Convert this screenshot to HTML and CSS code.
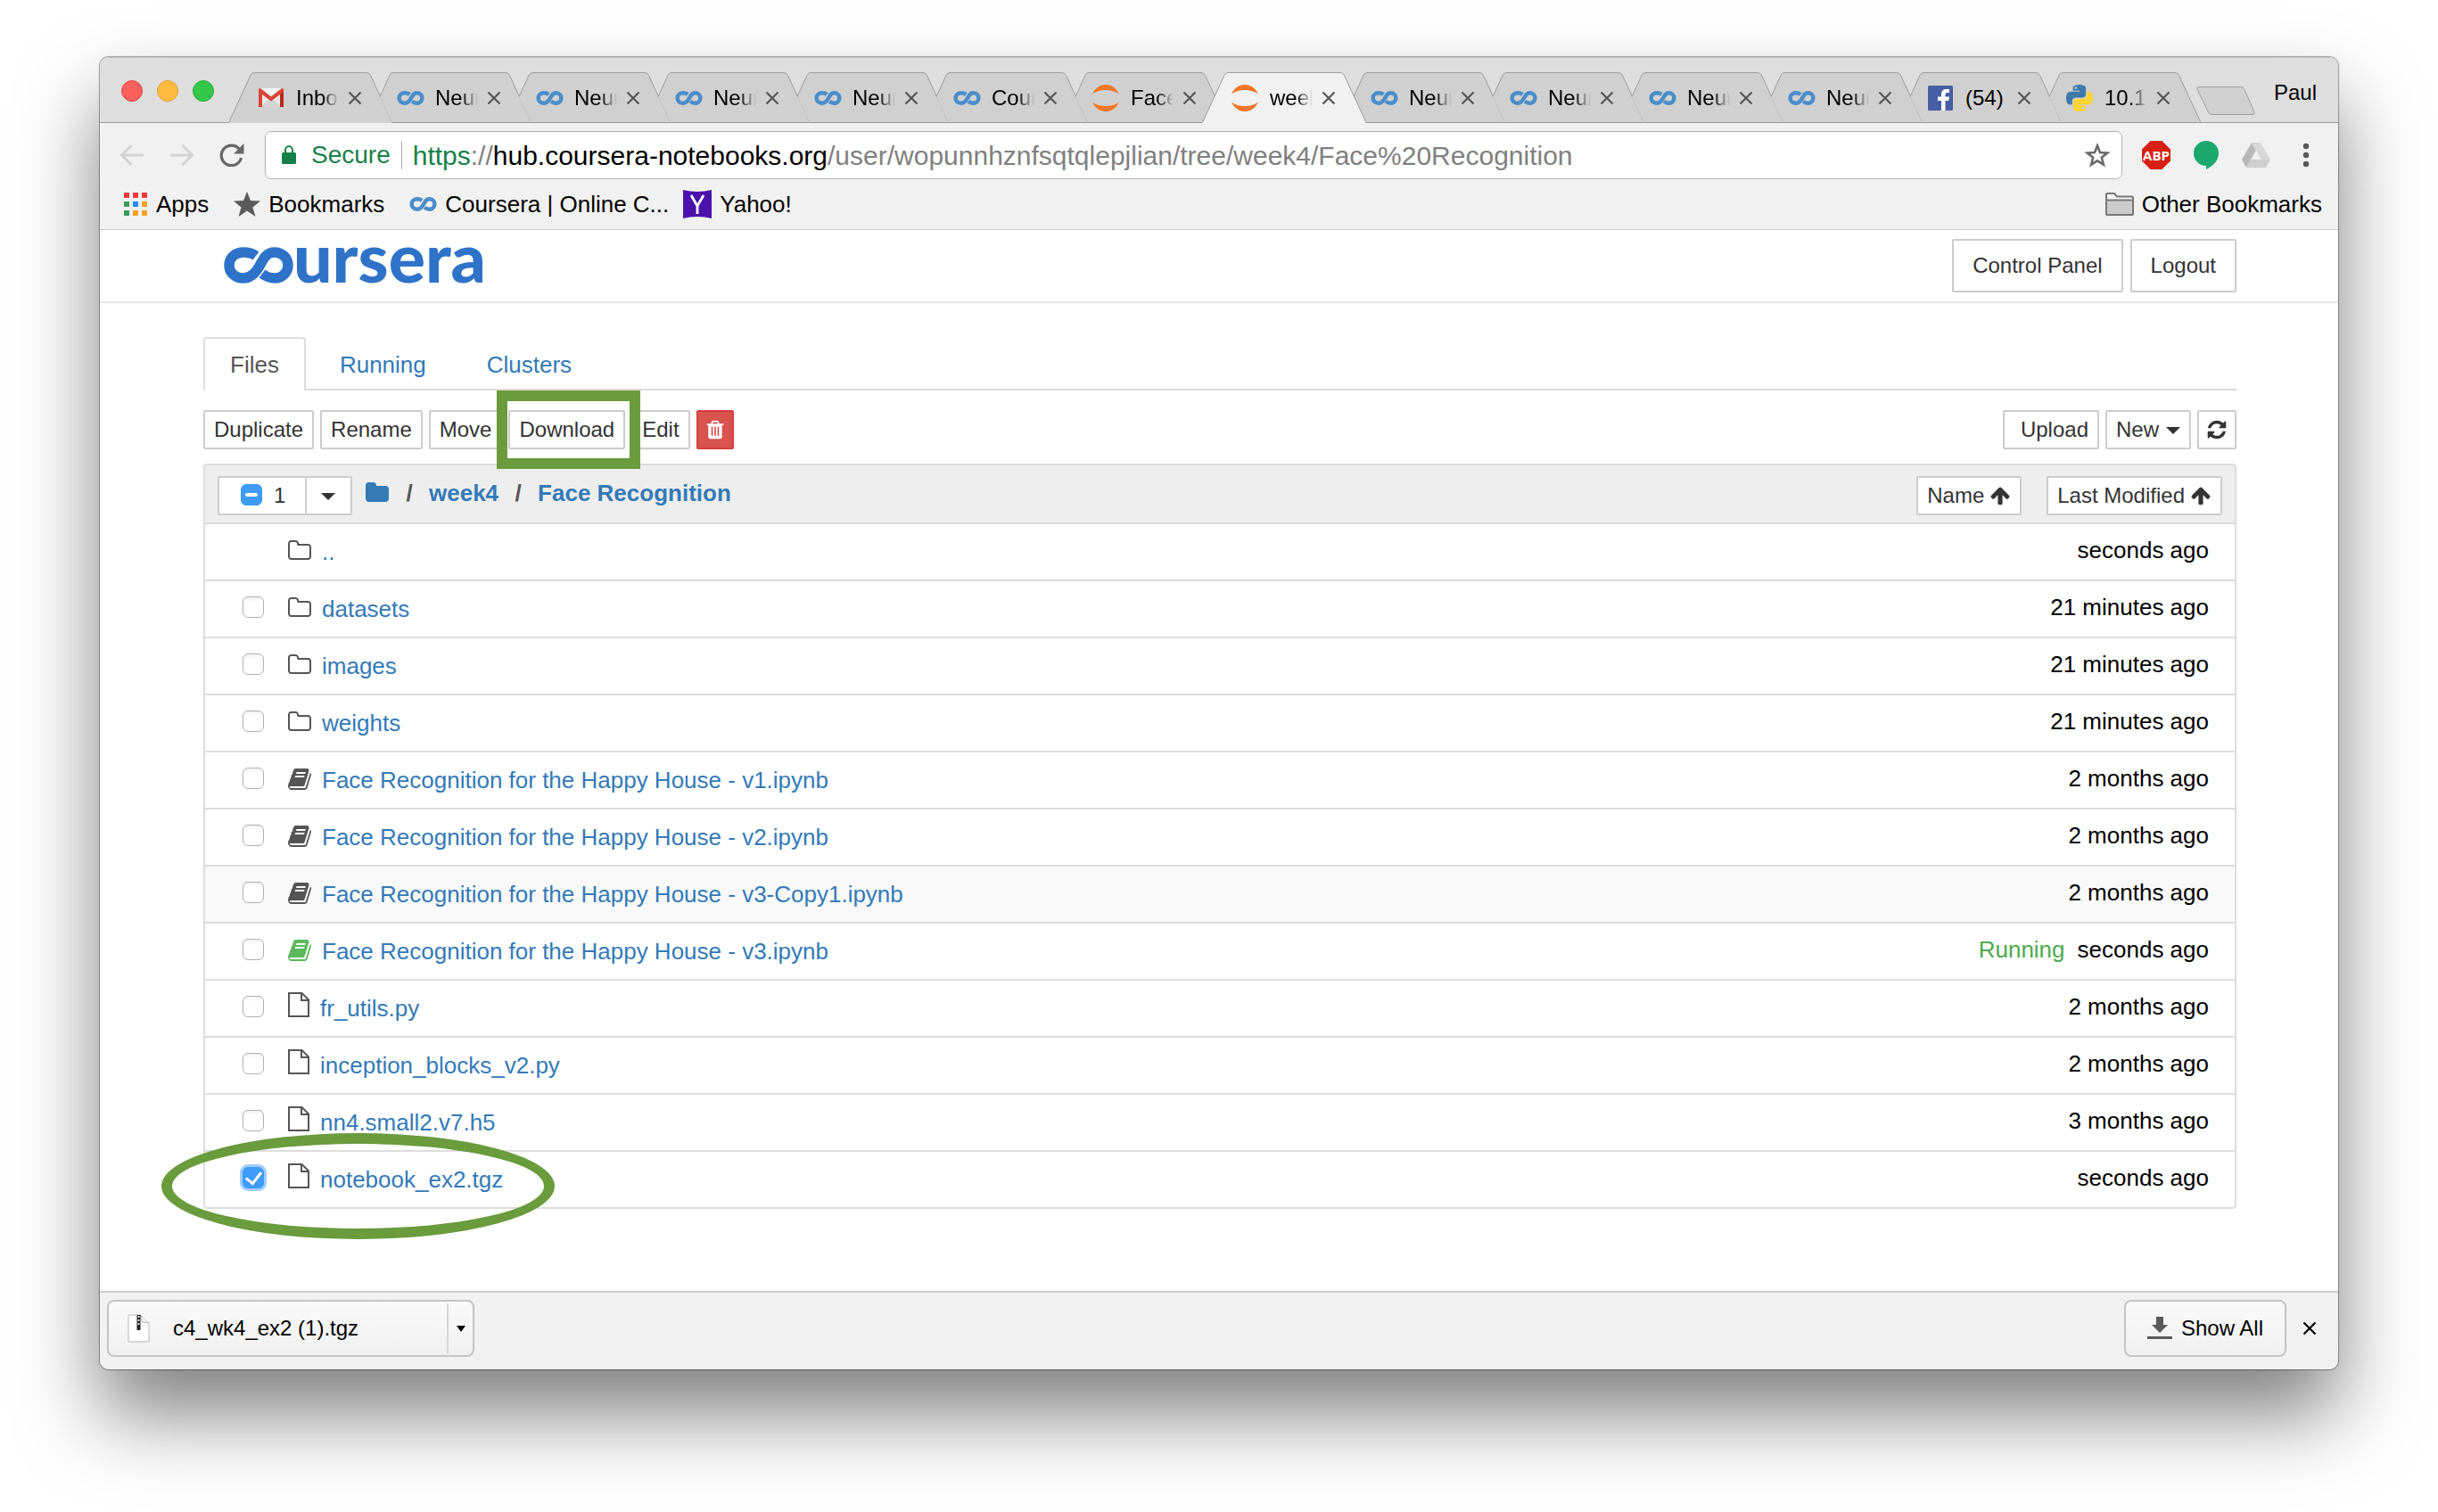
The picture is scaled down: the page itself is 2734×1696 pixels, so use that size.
FILE: index.html
```html
<!DOCTYPE html>
<html lang="en">
<head>
<meta charset="utf-8">
<title>Face Recognition</title>
<link rel="stylesheet" href="styles.css">
</head>
<body>
<svg class="sprite" aria-hidden="true">
  <symbol id="tab-full" viewBox="0 0 184 57"><path class="fill" d="M0 57 25 3.500Q26.500.5 29 .5H155Q158 .5 159.500 3.500L184 57z"/><path class="line" d="M.5 56.500 25 3.500Q26.500.5 29 .5H155Q158 .5 159.500 3.500L184 56.500"/></symbol>
  <symbol id="tab-notch" viewBox="0 0 184 57"><path class="fill" d="M28 57 14 27.500 25 3.500Q26.500.5 29 .5H155Q158 .5 159.500 3.500L184 57z"/><path class="line" d="M14 27.500 25 3.500Q26.500.5 29 .5H155Q158 .5 159.500 3.500L184 56.500M28 56.500H184"/></symbol>
  <symbol id="coursera" viewBox="0 0 78 41"><path d="M36 10C32 7 27 6 22 6 13 6 6 12 6 20.500 6 29 13 35 22 35 31 35 36 29 40.500 20.500 45 12 48 6 57 6 65 6 72 12 72 20.500 72 29 65 35 57 35 51 35 47 33 43 30" fill="none" stroke="currentColor" stroke-width="11.500"/></symbol>
  <symbol id="jupyter" viewBox="0 0 30 30"><path fill="#f37726" d="M0 10.500C3 4 8.500 0 15 0s12 4 15 10.500C26 7.500 21 6 15 6S4 7.500 0 10.500zM0 19.500C3 26 8.500 30 15 30s12-4 15-10.500C26 22.500 21 24 15 24S4 22.500 0 19.500z"/></symbol>
  <symbol id="gmail" viewBox="0 0 28 21"><path fill="#e9e9e9" d="M2 0h24v21H2z"/><path fill="#d4d4d4" d="M2 21 14 10l12 11z"/><path fill="#f5f5f5" d="M4 0h20L14 8z"/><path fill="#db4437" d="M0 21V1.500Q0 0 2 0L14 9.500 26 0q2 0 2 1.500V21h-4V7L14 14.500 4 7v14z"/><path fill="#b8281d" d="M24 21V7l4-3v17z"/></symbol>
  <symbol id="facebook" viewBox="0 0 28 28"><rect width="28" height="28" rx="1.500" fill="#475fa2"/><path fill="#fff" d="M15 28V17h-4v-4.500h4V9.500C15 6 17.500 4 20.500 4H24v4h-2.500C20 8 19.500 8.700 19.500 10v2.500H24l-.6 4.500h-3.900v11z"/></symbol>
  <symbol id="python" viewBox="0 0 24 24"><path fill="#3d7aab" d="M11.900 0C5.800 0 6.200 2.600 6.200 2.600v2.800H12v.8H3.900S0 5.800 0 11.900s3.400 5.900 3.400 5.900h2v-2.900s-.1-3.400 3.300-3.400h5.800s3.200 0 3.200-3.100V3.200S18.200 0 11.900 0zM8.700 1.800a1 1 0 1 1 0 2.100 1 1 0 0 1 0-2.100z"/><path transform="rotate(180 12 12)" fill="#fdd437" d="M11.900 0C5.800 0 6.200 2.600 6.200 2.600v2.800H12v.8H3.900S0 5.800 0 11.900s3.400 5.900 3.400 5.900h2v-2.900s-.1-3.400 3.300-3.400h5.800s3.200 0 3.200-3.100V3.200S18.200 0 11.900 0zM8.700 1.800a1 1 0 1 1 0 2.100 1 1 0 0 1 0-2.100z"/></symbol>
  <symbol id="cross" viewBox="0 0 16 16"><path d="M1.500 1.500l13 13M14.500 1.500l-13 13" fill="none" stroke="currentColor" stroke-width="2.200"/></symbol>
  <symbol id="caret" viewBox="0 0 16 8"><path d="M0 0h16L8 8z" fill="currentColor"/></symbol>
  <symbol id="folder-o" viewBox="0 0 1792 1792"><path fill="currentColor" d="M1600 1312v-704q0-40-28-68t-68-28h-704q-40 0-68-28t-28-68v-64q0-40-28-68t-68-28h-320q-40 0-68 28t-28 68v960q0 40 28 68t68 28h1216q40 0 68-28t28-68zm128-704v704q0 92-66 158t-158 66h-1216q-92 0-158-66t-66-158v-960q0-92 66-158t158-66h320q92 0 158 66t66 158v32h672q92 0 158 66t66 158z"/></symbol>
  <symbol id="folder" viewBox="0 0 1792 1792"><path fill="currentColor" d="M1728 608v704q0 92-66 158t-158 66h-1216q-92 0-158-66t-66-158v-960q0-92 66-158t158-66h320q92 0 158 66t66 158v32h672q92 0 158 66t66 158z"/></symbol>
  <symbol id="book" viewBox="0 0 1792 1792"><path fill="currentColor" d="M1703 478q40 57 18 129l-275 906q-19 64-76.500 107.500t-122.500 43.500h-923q-77 0-148.500-53.500t-99.500-131.500q-24-67-2-127 0-4 3-27t4-37q1-8-3-21.500t-3-19.500q2-11 8-21t16.500-23.500 16.500-23.500q23-38 45-91.500t30-91.500q3-10 .5-30t-.5-28q3-11 17-28t17-23q21-36 42-92t25-90q1-9-2.500-32t.5-28q4-13 22-30.500t22-22.500q19-26 42.500-84.500t27.500-96.500q1-8-3-25.500t-2-26.500q2-8 9-18t18-23 17-21q8-12 16.500-30.500t15-35 16-36 19.500-32 26.500-23.500 36-11.500 47.500 5.500l-1 3q38-9 51-9h761q74 0 114 56t18 130l-274 906q-36 119-71.500 153.500t-128.500 34.500h-869q-27 0-38 15-11 16-1 43 24 70 144 70h923q29 0 56-15.500t35-41.500l300-987q7-22 5-57 38 15 59 43zm-1064 2q-4 13 2 22.500t20 9.500h608q13 0 25.500-9.500t16.500-22.500l21-64q4-13-2-22.500t-20-9.500h-608q-13 0-25.500 9.500t-16.500 22.500zm-83 256q-4 13 2 22.500t20 9.500h608q13 0 25.500-9.500t16.500-22.500l21-64q4-13-2-22.500t-20-9.500h-608q-13 0-25.500 9.500t-16.500 22.500z"/></symbol>
  <symbol id="file" viewBox="0 0 26 28"><path d="M2 1h14.500L24 8.500V27H2zM16 1v8h8" fill="none" stroke="currentColor" stroke-width="2"/></symbol>
  <symbol id="arrow-up" viewBox="0 0 1792 1792"><path fill="currentColor" d="M1675 971q0 51-37 90l-75 75q-38 38-91 38-54 0-90-38l-294-293v704q0 52-37.500 84.500t-90.500 32.500h-128q-53 0-90.500-32.500t-37.500-84.500v-704l-294 293q-36 38-90 38t-90-38l-75-75q-38-38-38-90 0-53 38-91l651-651q35-37 90-37 54 0 91 37l651 651q37 39 37 91z"/></symbol>
  <symbol id="refresh" viewBox="0 0 1792 1792"><path fill="currentColor" d="M1639 1056q0 5-1 7-64 268-268 434.500t-478 166.500q-146 0-282.500-55t-243.500-157l-129 129q-19 19-45 19t-45-19-19-45v-448q0-26 19-45t45-19h448q26 0 45 19t19 45-19 45l-137 137q71 66 161 102t187 36q134 0 250-65t186-179q11-17 53-117 8-23 30-23h192q13 0 22.500 9.500t9.500 22.500zm25-800v448q0 26-19 45t-45 19h-448q-26 0-45-19t-19-45 19-45l138-138q-148-137-349-137-134 0-250 65t-186 179q-11 17-53 117-8 23-30 23h-199q-13 0-22.500-9.500t-9.500-22.500v-7q65-268 270-434.500t480-166.500q146 0 284 55.500t245 156.500l130-129q19-19 45-19t45 19 19 45z"/></symbol>
  <symbol id="trash" viewBox="0 0 1792 1792"><path fill="currentColor" d="M704 1376v-704q0-14-9-23t-23-9h-64q-14 0-23 9t-9 23v704q0 14 9 23t23 9h64q14 0 23-9t9-23zm256 0v-704q0-14-9-23t-23-9h-64q-14 0-23 9t-9 23v704q0 14 9 23t23 9h64q14 0 23-9t9-23zm256 0v-704q0-14-9-23t-23-9h-64q-14 0-23 9t-9 23v704q0 14 9 23t23 9h64q14 0 23-9t9-23zm-544-992h448l-48-117q-7-9-17-11h-317q-10 2-17 11zm928 32v64q0 14-9 23t-23 9h-96v948q0 83-47 143.500t-113 60.500h-832q-66 0-113-58.500t-47-141.500v-952h-96q-14 0-23-9t-9-23v-64q0-14 9-23t23-9h309l70-167q15-37 54-63t79-26h320q40 0 79 26t54 63l70 167h309q14 0 23 9t9 23z"/></symbol>
</svg>

<div class="window">
  <div class="tabstrip">
    <div class="lights"><button class="light red" aria-label="Close window"></button><button class="light amber" aria-label="Minimize"></button><button class="light green" aria-label="Zoom"></button></div>
    <div class="tabs">
      <div class="tab"><svg class="shape"><use href="#tab-full"/></svg><svg class="fav gmail"><use href="#gmail"/></svg><span class="title">Inbo</span><button class="close" aria-label="Close tab"><svg><use href="#cross"/></svg></button></div>
      <div class="tab"><svg class="shape"><use href="#tab-notch"/></svg><svg class="fav coursera"><use href="#coursera"/></svg><span class="title">Neur</span><button class="close" aria-label="Close tab"><svg><use href="#cross"/></svg></button></div>
      <div class="tab"><svg class="shape"><use href="#tab-notch"/></svg><svg class="fav coursera"><use href="#coursera"/></svg><span class="title">Neur</span><button class="close" aria-label="Close tab"><svg><use href="#cross"/></svg></button></div>
      <div class="tab"><svg class="shape"><use href="#tab-notch"/></svg><svg class="fav coursera"><use href="#coursera"/></svg><span class="title">Neur</span><button class="close" aria-label="Close tab"><svg><use href="#cross"/></svg></button></div>
      <div class="tab"><svg class="shape"><use href="#tab-notch"/></svg><svg class="fav coursera"><use href="#coursera"/></svg><span class="title">Neur</span><button class="close" aria-label="Close tab"><svg><use href="#cross"/></svg></button></div>
      <div class="tab"><svg class="shape"><use href="#tab-notch"/></svg><svg class="fav coursera"><use href="#coursera"/></svg><span class="title">Cour</span><button class="close" aria-label="Close tab"><svg><use href="#cross"/></svg></button></div>
      <div class="tab"><svg class="shape"><use href="#tab-notch"/></svg><svg class="fav"><use href="#jupyter"/></svg><span class="title">Face</span><button class="close" aria-label="Close tab"><svg><use href="#cross"/></svg></button></div>
      <div class="tab active"><svg class="shape"><use href="#tab-full"/></svg><svg class="fav"><use href="#jupyter"/></svg><span class="title">week</span><button class="close" aria-label="Close tab"><svg><use href="#cross"/></svg></button></div>
      <div class="tab"><svg class="shape"><use href="#tab-notch"/></svg><svg class="fav coursera"><use href="#coursera"/></svg><span class="title">Neur</span><button class="close" aria-label="Close tab"><svg><use href="#cross"/></svg></button></div>
      <div class="tab"><svg class="shape"><use href="#tab-notch"/></svg><svg class="fav coursera"><use href="#coursera"/></svg><span class="title">Neur</span><button class="close" aria-label="Close tab"><svg><use href="#cross"/></svg></button></div>
      <div class="tab"><svg class="shape"><use href="#tab-notch"/></svg><svg class="fav coursera"><use href="#coursera"/></svg><span class="title">Neur</span><button class="close" aria-label="Close tab"><svg><use href="#cross"/></svg></button></div>
      <div class="tab"><svg class="shape"><use href="#tab-notch"/></svg><svg class="fav coursera"><use href="#coursera"/></svg><span class="title">Neur</span><button class="close" aria-label="Close tab"><svg><use href="#cross"/></svg></button></div>
      <div class="tab"><svg class="shape"><use href="#tab-notch"/></svg><svg class="fav facebook"><use href="#facebook"/></svg><span class="title whole">(54)</span><button class="close" aria-label="Close tab"><svg><use href="#cross"/></svg></button></div>
      <div class="tab"><svg class="shape"><use href="#tab-notch"/></svg><svg class="fav python"><use href="#python"/></svg><span class="title">10.1</span><button class="close" aria-label="Close tab"><svg><use href="#cross"/></svg></button></div>
    </div>
    <button class="newtab" aria-label="New tab"><svg viewBox="0 0 66 32"><path d="M4 .5H50q2.500 0 3.500 2L65 28.500q1 3-2 3H18q-3 0-4.500-2.500L1 3Q0 .5 4 .5z" fill="#d0d0d0" stroke="#a0a0a0"/></svg></button>
    <button class="profile">Paul</button>
  </div>

  <div class="toolbar">
    <div class="nav">
      <button aria-label="Back"><svg width="28" height="26" viewBox="0 0 28 26"><path d="M27 13H3M13.500 2 2.500 13l11 11" fill="none" stroke="#d3d3d3" stroke-width="3"/></svg></button>
      <button aria-label="Forward"><svg width="28" height="26" viewBox="0 0 28 26"><path d="M1 13h24M14.500 2l11 11-11 11" fill="none" stroke="#d3d3d3" stroke-width="3"/></svg></button>
      <button aria-label="Reload"><svg width="28" height="26" viewBox="0 0 28 26"><path d="M22.500 6.500A11.300 11.300 0 1 0 24.500 16" fill="none" stroke="#676767" stroke-width="3.200"/><path d="M27.500 0v11.500H16z" fill="#676767"/></svg></button>
    </div>
    <div class="omnibox">
      <svg width="16" height="22" viewBox="0 0 16 22"><rect y="8" width="16" height="13" rx="1.500" fill="#178048"/><path d="M4 9V5.500a4 4.500 0 0 1 8 0V9" fill="none" stroke="#178048" stroke-width="2"/></svg>
      <span class="secure">Secure</span>
      <div class="url" role="textbox" aria-label="Address" tabindex="0"><span class="scheme">https</span><span>://</span><span class="host">hub.coursera-notebooks.org</span><span>/user/wopunnhznfsqtqlepjlian/tree/week4/Face%20Recognition</span></div>
      <button aria-label="Bookmark this page"><svg width="30" height="28" viewBox="0 0 30 28"><path d="M15 3.500l3 7.600 8.200.5-6.400 5.100 2.100 8L15 20.300 8.100 24.700l2.100-8-6.400-5.100 8.200-.5z" fill="none" stroke="#6b6b6b" stroke-width="2.600"/></svg></button>
    </div>
    <div class="extensions">
      <button aria-label="Adblock Plus"><svg width="32" height="32" viewBox="0 0 32 32"><path d="M9.500 0h13L32 9.500v13L22.500 32h-13L0 22.500v-13z" fill="#d92015"/><text x="16" y="22" text-anchor="middle" class="abp">ABP</text></svg></button>
      <button aria-label="Hangouts"><svg width="28" height="32" viewBox="0 0 28 32"><path d="M14 0a14 14 0 0 1 14 14c0 8-6 14-14 18v-4A14 14 0 0 1 14 0z" fill="#1ba96d"/></svg></button>
      <button aria-label="Drive"><svg width="32" height="28" viewBox="0 0 32 28"><path d="M11 0 0 19l5 9 11-19z" fill="#b9b9b9"/><path d="M11 0h10l11 19H21.500z" fill="#d8d8d8"/><path d="M10 19h22l-5 9H5z" fill="#cfcfcf"/><path d="M16 9.500 11 18h10z" fill="#f1f1f1"/></svg></button>
      <button aria-label="Menu"><svg width="8" height="28" viewBox="0 0 8 28"><g fill="#5a5a5a"><circle cx="4" cy="4" r="3.200"/><circle cx="4" cy="14" r="3.200"/><circle cx="4" cy="24" r="3.200"/></g></svg></button>
    </div>
  </div>

  <nav class="bookmarks" aria-label="Bookmarks bar">
    <a href="#"><svg class="apps" width="26" height="26" viewBox="0 0 26 26"><path fill="#f13b3b" d="M0 0h6v6H0zM10 0h6v6h-6zM20 0h6v6h-6z"/><path fill="#3a9f5c" d="M0 10h6v6H0zM0 20h6v6H0z"/><path fill="#2a8af3" d="M10 10h6v6h-6z"/><path fill="#f3a126" d="M20 10h6v6h-6zM10 20h6v6h-6zM20 20h6v6h-6z"/></svg>Apps</a>
    <a href="#"><svg width="30" height="28" viewBox="0 0 30 28"><path d="M15 0l4 10 11 .6-8.600 6.800L24.500 28 15 21.500 5.500 28l3-10.600L0 10.600 11 10z" fill="#5a5a5a"/></svg>Bookmarks</a>
    <a href="#"><svg class="coursera" width="31" height="16"><use href="#coursera"/></svg>Coursera | Online C...</a>
    <a href="#"><svg width="32" height="32" viewBox="0 0 32 32"><path d="M0 0q16 4 32 0v32q-16-4-32 0z" fill="#4a12a8"/><path d="M9 6 16 18v9M23 6 16 18" fill="none" stroke="#fff" stroke-width="2.800"/></svg>Yahoo!</a>
    <a href="#" class="other"><svg width="32" height="26" viewBox="0 0 32 26"><path d="M1 24V2q0-1 1-1h8l3 3.500h17q1 0 1 1V24q0 1-1 1H2q-1 0-1-1z" fill="#f4f4f4" stroke="#777" stroke-width="2"/><path d="M2 9h28v15H2z" fill="#ccc"/><path d="M1 8.500h30" stroke="#777" stroke-width="2"/></svg>Other Bookmarks</a>
  </nav>

  <main class="page">
    <header class="site-header">
      <a href="#" class="logo" aria-label="Coursera home"><svg><use href="#coursera"/></svg><span>ursera</span></a>
      <div class="account"><button class="btn large">Control Panel</button><button class="btn large">Logout</button></div>
    </header>

    <div class="content">
      <nav class="page-tabs"><a href="#" class="current">Files</a><a href="#">Running</a><a href="#">Clusters</a></nav>

      <div class="actions">
        <button class="btn">Duplicate</button>
        <button class="btn">Rename</button>
        <button class="btn">Move</button>
        <div class="marked"><button class="btn">Download</button><span class="mark-box"></span></div>
        <button class="btn">Edit</button>
        <button class="btn danger" aria-label="Delete"><svg><use href="#trash"/></svg></button>
        <div class="right">
          <button class="btn upload">Upload</button>
          <button class="btn">New<svg class="caret"><use href="#caret"/></svg></button>
          <button class="btn icon" aria-label="Refresh"><svg><use href="#refresh"/></svg></button>
        </div>
      </div>

      <table class="files">
        <thead><tr>
          <th><div class="head-left">
            <div class="select"><label class="btn"><input type="checkbox" class="some" aria-label="Select all"><span>1</span></label><button class="btn" aria-label="Selection menu"><svg class="caret"><use href="#caret"/></svg></button></div>
            <div class="crumbs"><a href="#" aria-label="Home"><svg><use href="#folder"/></svg></a><span>/</span><a href="#">week4</a><span>/</span><a href="#">Face Recognition</a></div>
          </div></th>
          <th><div class="head-right"><button class="btn">Name<svg><use href="#arrow-up"/></svg></button><button class="btn">Last Modified<svg><use href="#arrow-up"/></svg></button></div></th>
        </tr></thead>
        <tbody>
          <tr><td><div class="item parent"><svg><use href="#folder-o"/></svg><a href="#">..</a></div></td><td class="when">seconds ago</td></tr>
          <tr><td><div class="item"><input type="checkbox" aria-label="datasets"><svg><use href="#folder-o"/></svg><a href="#">datasets</a></div></td><td class="when">21 minutes ago</td></tr>
          <tr><td><div class="item"><input type="checkbox" aria-label="images"><svg><use href="#folder-o"/></svg><a href="#">images</a></div></td><td class="when">21 minutes ago</td></tr>
          <tr><td><div class="item"><input type="checkbox" aria-label="weights"><svg><use href="#folder-o"/></svg><a href="#">weights</a></div></td><td class="when">21 minutes ago</td></tr>
          <tr><td><div class="item"><input type="checkbox" aria-label="v1"><svg><use href="#book"/></svg><a href="#">Face Recognition for the Happy House - v1.ipynb</a></div></td><td class="when">2 months ago</td></tr>
          <tr><td><div class="item"><input type="checkbox" aria-label="v2"><svg><use href="#book"/></svg><a href="#">Face Recognition for the Happy House - v2.ipynb</a></div></td><td class="when">2 months ago</td></tr>
          <tr class="hover"><td><div class="item"><input type="checkbox" aria-label="v3-Copy1"><svg><use href="#book"/></svg><a href="#">Face Recognition for the Happy House - v3-Copy1.ipynb</a></div></td><td class="when">2 months ago</td></tr>
          <tr><td><div class="item live"><input type="checkbox" aria-label="v3"><svg><use href="#book"/></svg><a href="#">Face Recognition for the Happy House - v3.ipynb</a></div></td><td class="when"><span class="running">Running</span>seconds ago</td></tr>
          <tr><td><div class="item file"><input type="checkbox" aria-label="fr_utils.py"><svg><use href="#file"/></svg><a href="#">fr_utils.py</a></div></td><td class="when">2 months ago</td></tr>
          <tr><td><div class="item file"><input type="checkbox" aria-label="inception_blocks_v2.py"><svg><use href="#file"/></svg><a href="#">inception_blocks_v2.py</a></div></td><td class="when">2 months ago</td></tr>
          <tr><td><div class="item file"><input type="checkbox" aria-label="nn4.small2.v7.h5"><svg><use href="#file"/></svg><a href="#">nn4.small2.v7.h5</a></div></td><td class="when">3 months ago</td></tr>
          <tr><td><div class="item file marked"><input type="checkbox" checked aria-label="notebook_ex2.tgz"><svg><use href="#file"/></svg><a href="#">notebook_ex2.tgz</a><span class="mark-ring"></span></div></td><td class="when">seconds ago</td></tr>
        </tbody>
      </table>
    </div>
  </main>

  <footer class="shelf">
    <div class="download">
      <button class="download-name"><svg width="26" height="32" viewBox="0 0 26 32"><path d="M1 1h14l9 9v21H1z" fill="#fff" stroke="#bbb"/><path d="M15 1l1 8 8 1" fill="#eee" stroke="#bbb"/><path d="M12.500 1v17" stroke="#222" stroke-width="4"/><path d="M12.500 2v12" stroke="#ddd" stroke-width="2" stroke-dasharray="2 2"/></svg>c4_wk4_ex2 (1).tgz</button>
      <button class="download-menu" aria-label="Download options"><svg width="10" height="7" viewBox="0 0 10 7"><path d="M0 0h10L5 7z"/></svg></button>
    </div>
    <button class="show-all"><svg width="28" height="26" viewBox="0 0 28 26"><path d="M10 0h8v9h5l-9 9-9-9h5zM0 22h28v3H0z" fill="#5a5a5a"/></svg>Show All</button>
    <button class="shelf-close" aria-label="Close downloads bar"><svg><use href="#cross"/></svg></button>
  </footer>
</div>
</body>
</html>
```

FILE: styles.css
```css
* { box-sizing: border-box; }

body {
  margin: 0;
  padding: 64px 112px 160px;
  min-height: 100vh;
  display: flex;
  background: #fff;
  color: #000;
  font: 26px/32px "Liberation Sans", Arial, sans-serif;
  overflow-x: hidden;
}

a { color: #337ab7; text-decoration: none; }
button { font: inherit; color: inherit; background: none; border: 0; padding: 0; margin: 0; }
svg { display: block; flex: none; }
.sprite { position: absolute; width: 0; height: 0; }

.window {
  flex: 1;
  min-width: 0;
  display: flex;
  flex-direction: column;
  border-radius: 10px;
  background: #fff;
  overflow: clip;
  box-shadow: 0 0 1px 1px rgba(0, 0, 0, .35), 0 50px 90px rgba(0, 0, 0, .5);
}

/* Tab strip */
.tabstrip {
  display: flex;
  align-items: flex-end;
  height: 74px;
  background: #dedede;
  box-shadow: inset 0 1px #c4c4c4, inset 0 -1px #9c9c9c;
  font-size: 24px;
}
.lights { display: flex; gap: 16px; padding: 0 16px 24px 24px; }
.light { width: 24px; height: 24px; border-radius: 50%; border: 1px solid; }
.light.red { background: #fc605c; border-color: #de4643; }
.light.amber { background: #fdbc40; border-color: #dd9e33; }
.light.green { background: #34c84a; border-color: #27a935; }
.tabs { display: flex; }
.tab {
  position: relative;
  display: flex;
  align-items: center;
  width: 184px;
  height: 57px;
  padding: 0 33px;
}
.tab + .tab { margin-left: -28px; }
.tab.active { z-index: 1; }
.shape {
  position: absolute;
  inset: 0;
  width: 184px;
  height: 57px;
  fill: #d0d0d0;
  color: #9c9c9c;
}
.fill { fill: inherit; }
.line { fill: none; stroke: currentColor; }
.active .shape { fill: #f1f1f1; }
.fav { position: relative; width: 30px; height: 30px; margin-right: 13px; }
.fav.coursera { width: 31px; height: 16px; margin-right: 12px; }
.fav.gmail, .fav.facebook { width: 28px; height: 28px; margin: 0 14px 0 1px; }
.fav.gmail { height: 21px; }
.coursera { color: #4a8dca; }
.title {
  position: relative;
  width: 48px;
  overflow: hidden;
  white-space: nowrap;
  -webkit-mask-image: linear-gradient(90deg, #000 60%, transparent);
  mask-image: linear-gradient(90deg, #000 60%, transparent);
}
.title.whole { -webkit-mask-image: none; mask-image: none; }
.close { position: relative; margin-left: 10px; color: #555; }
.close svg { width: 16px; height: 16px; }
.newtab { margin: 0 0 9px -5px; }
.newtab svg { width: 66px; height: 32px; }
.profile { margin: 0 24px 18px auto; }

/* Address row */
.toolbar {
  display: flex;
  align-items: center;
  height: 72px;
  background: #f1f1f1;
}
.nav { display: flex; gap: 28px; padding: 0 23px 0 22px; }
.omnibox {
  flex: 1;
  min-width: 0;
  display: flex;
  align-items: center;
  height: 54px;
  padding: 0 12px 0 18px;
  background: #fff;
  border: 1px solid #b4b4b4;
  border-radius: 7px;
  font-size: 28px;
}
.secure { color: #178048; margin-left: 17px; padding-right: 12px; border-right: 1px solid #aaa; }
.url { flex: 1; min-width: 0; margin-left: 12px; padding-top: 1px; color: #808080; font-size: 30px; line-height: 36px; white-space: nowrap; overflow: hidden; }
.scheme { color: #178048; }
.host { color: #000; }
.extensions { display: flex; align-items: center; gap: 26px; padding: 0 32px 0 22px; }
.extensions button:last-child { margin-left: 10px; }
.abp { font: bold 15px "Open Sans", sans-serif; fill: #fff; }

/* Bookmarks bar */
.bookmarks {
  display: flex;
  align-items: center;
  height: 48px;
  padding: 0 18px 10px 26px;
  background: #f1f1f1;
  border-bottom: 1px solid #cecece;
}
.bookmarks a { display: flex; align-items: center; gap: 9px; color: #000; margin-right: 16px; }
.bookmarks a:nth-child(-n+2) { margin-right: 28px; }
.bookmarks .apps { margin: 0 1px; }
.bookmarks a.other { margin: 0 0 0 auto; }

/* Page */
.page { flex: 1; }
.site-header {
  display: flex;
  justify-content: space-between;
  align-items: flex-start;
  height: 82px;
  padding: 10px 114px 0 139px;
  border-bottom: 2px solid #e7e7e7;
}
.logo { display: flex; align-items: center; height: 58px; color: #2f73c9; }
.logo svg { width: 78px; height: 41px; }
.logo span { font: 900 77px/40px Lato, sans-serif; padding-bottom: 20px; }
.account { display: flex; gap: 8px; }
.btn {
  display: flex;
  align-items: center;
  height: 44px;
  padding: 0 10px;
  background: #fff;
  border: 2px solid #ccc;
  border-radius: 2px;
  color: #333;
  font-size: 24px;
  font-weight: 400;
}
.btn.large { height: 60px; padding: 0 21px; }
.content { padding: 38px 114px 0 116px; }

.page-tabs { display: flex; gap: 8px; height: 60px; border-bottom: 2px solid #ddd; }
.page-tabs a { height: 60px; padding: 15px 30px 0; }
.page-tabs .current {
  padding: 13px 28px 0;
  color: #555;
  background: #fff;
  border: 2px solid #ddd;
  border-bottom: 0;
  border-radius: 4px 4px 0 0;
}

.actions { display: flex; gap: 7px; padding: 22px 0 16px; }
.right { display: flex; gap: 7px; margin-left: auto; }
.marked { position: relative; }
.mark-box { position: absolute; left: -13px; top: -22px; width: 161px; height: 88px; border: 12px solid #6a9b3c; pointer-events: none; z-index: 1; }
.mark-ring { position: absolute; left: -49px; top: -21px; width: 441px; height: 119px; border: 12px solid #6a9b3c; border-radius: 50%; pointer-events: none; }
.danger { background: #d9534f; border-color: #d43f3a; color: #fff; padding: 0 7px; }
.btn svg { width: 24px; height: 24px; }
.btn .caret { width: 16px; height: 8px; margin: 2px 0 0 8px; }
.btn.icon { padding: 0 8px; }
.btn.upload { padding-left: 18px; }

/* File listing */
.files { width: 100%; border: 2px solid #ddd; border-radius: 4px; border-spacing: 0; }
th, td { padding: 0; height: 64px; text-align: left; }
th { background: #eee; }
td { border-top: 2px solid #ddd; }
.head-left, .head-right { display: flex; align-items: center; padding: 4px 14px 0; }
.head-right { justify-content: flex-end; gap: 28px; }
.head-right svg { margin-left: 6px; }
.select { display: flex; }
.select label { width: 100px; padding: 0 24px; gap: 13px; }
.select button { width: 53px; margin-left: -2px; }
.select .caret { margin-left: 6px; }
.crumbs { display: flex; align-items: center; padding: 0 0 6px 14px; font-weight: 700; }
.crumbs span { width: 44px; text-align: center; color: #555; }
.crumbs svg { width: 28px; height: 28px; }
.item { display: flex; align-items: center; height: 62px; padding-left: 42px; }
.item svg { width: 28px; height: 28px; margin: 0 11px 3px 26px; color: #555; }
.item.file svg { width: 26px; margin-bottom: 8px; }
.item.parent { padding-left: 66px; }
.item.live svg { color: #5cb85c; }
.when { padding: 0 29px 5px 0; text-align: right; }
.running { color: #4caa4c; margin-right: 14px; }
.hover { background: #f9f9f9; }

input[type="checkbox"] {
  appearance: none;
  flex: none;
  width: 24px;
  height: 24px;
  margin: 0 0 4px;
  border: 1px solid #b0b0b0;
  border-radius: 6px;
  background: linear-gradient(#f2f2f2, #fff 25%);
}
input.some[type="checkbox"], input[type="checkbox"]:checked {
  border-color: #3b99fc;
  background: #3f9bf8;
  display: grid;
  place-items: center;
}
input.some[type="checkbox"] { margin: 0 0 2px; }
input.some::before { content: ""; width: 14px; height: 4px; border-radius: 2px; background: #fff; }
input:checked { box-shadow: 0 0 0 3px #a2cdfb; }
input:checked::before {
  content: "";
  width: 8px;
  height: 14px;
  margin-bottom: 3px;
  border: solid #fff;
  border-width: 0 3px 3px 0;
  transform: rotate(38deg);
}

/* Download shelf */
.shelf {
  display: flex;
  height: 88px;
  padding: 8px 24px 0 8px;
  background: #f1f1f1;
  border-top: 2px solid #ccc;
  font-size: 24px;
}
.download, .show-all {
  display: flex;
  align-items: center;
  height: 64px;
  background: linear-gradient(#fafafa, #f0f0f0);
  border: 2px solid #c3c3c3;
  border-radius: 8px;
}
.download { width: 412px; }
.download-name { flex: 1; display: flex; align-items: center; gap: 25px; padding-left: 21px; height: 56px; border-right: 2px solid #d6d6d6; }
.download-menu { width: 27px; height: 56px; display: grid; place-items: center; }
.show-all { margin-left: auto; padding: 0 24px; gap: 10px; }
.shelf-close { height: 64px; margin-left: 18px; }
.shelf-close svg { width: 16px; height: 16px; }
```
